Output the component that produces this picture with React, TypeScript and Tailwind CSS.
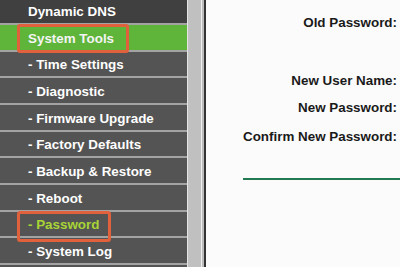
const items = [
  { label: 'Dynamic DNS', top: true },
  { label: 'System Tools', active: true },
  { label: '- Time Settings' },
  { label: '- Diagnostic' },
  { label: '- Firmware Upgrade' },
  { label: '- Factory Defaults' },
  { label: '- Backup & Restore' },
  { label: '- Reboot' },
  { label: '- Password', current: true },
  { label: '- System Log' },
  { label: '' },
];

const font = { fontFamily: '"Liberation Sans", Arial, sans-serif' };

export default function App() {
  return (
    <div className="flex h-[267px] w-[400px] overflow-hidden bg-[#fbfbfb]" style={font}>
      <div className="relative w-[187px] shrink-0">
        <div className="-mt-[1.7px] flex flex-col">
          {items.map((item, i) => {
            const bg = item.active ? 'bg-[#5fb53a]' : item.top ? 'bg-[#404040]' : 'bg-[#545454]';
            const color = item.current ? 'text-[#a8d436]' : item.active ? 'text-[#f4f4f4]' : 'text-white';
            return (
              <div
                key={i}
                className={`flex h-[26.67px] shrink-0 items-center border-b-2 border-[#a3a3a3] pl-[28px] pt-[3px] text-[13.4px] font-bold ${bg} ${color}`}
              >
                {item.label}
              </div>
            );
          })}
        </div>
        <div className="absolute left-[17px] top-[24px] h-[29px] w-[112px] rounded-[3px] border-[3px] border-[#e0613c]" />
        <div className="absolute left-[17px] top-[211px] h-[31px] w-[94px] rounded-[3px] border-[3px] border-[#e0613c]" />
      </div>
      <div className="flex shrink-0">
        <div className="w-px bg-[#e4e4e4]" />
        <div className="w-[13px] bg-[#c0c0c0]" />
        <div className="w-px bg-[#efefef]" />
        <div className="w-[2px] bg-[#bcbcbc]" />
        <div className="w-[2px] bg-[#333333]" />
      </div>
      <div className="flex flex-1 flex-col pt-[15px] text-[13.4px] font-bold text-[#1a1a1a]">
        <div className="h-[58px] pr-[3px] text-right leading-[15px]">Old Password:</div>
        <div className="h-[27px] pr-[3px] text-right leading-[15px]">New User Name:</div>
        <div className="h-[29px] pr-[3px] text-right leading-[15px]">New Password:</div>
        <div className="h-[15px] pr-[3px] text-right leading-[15px]">Confirm New Password:</div>
        <div className="ml-[37px] mt-[34px] h-[2px] bg-[#237a52]" />
      </div>
    </div>
  );
}
